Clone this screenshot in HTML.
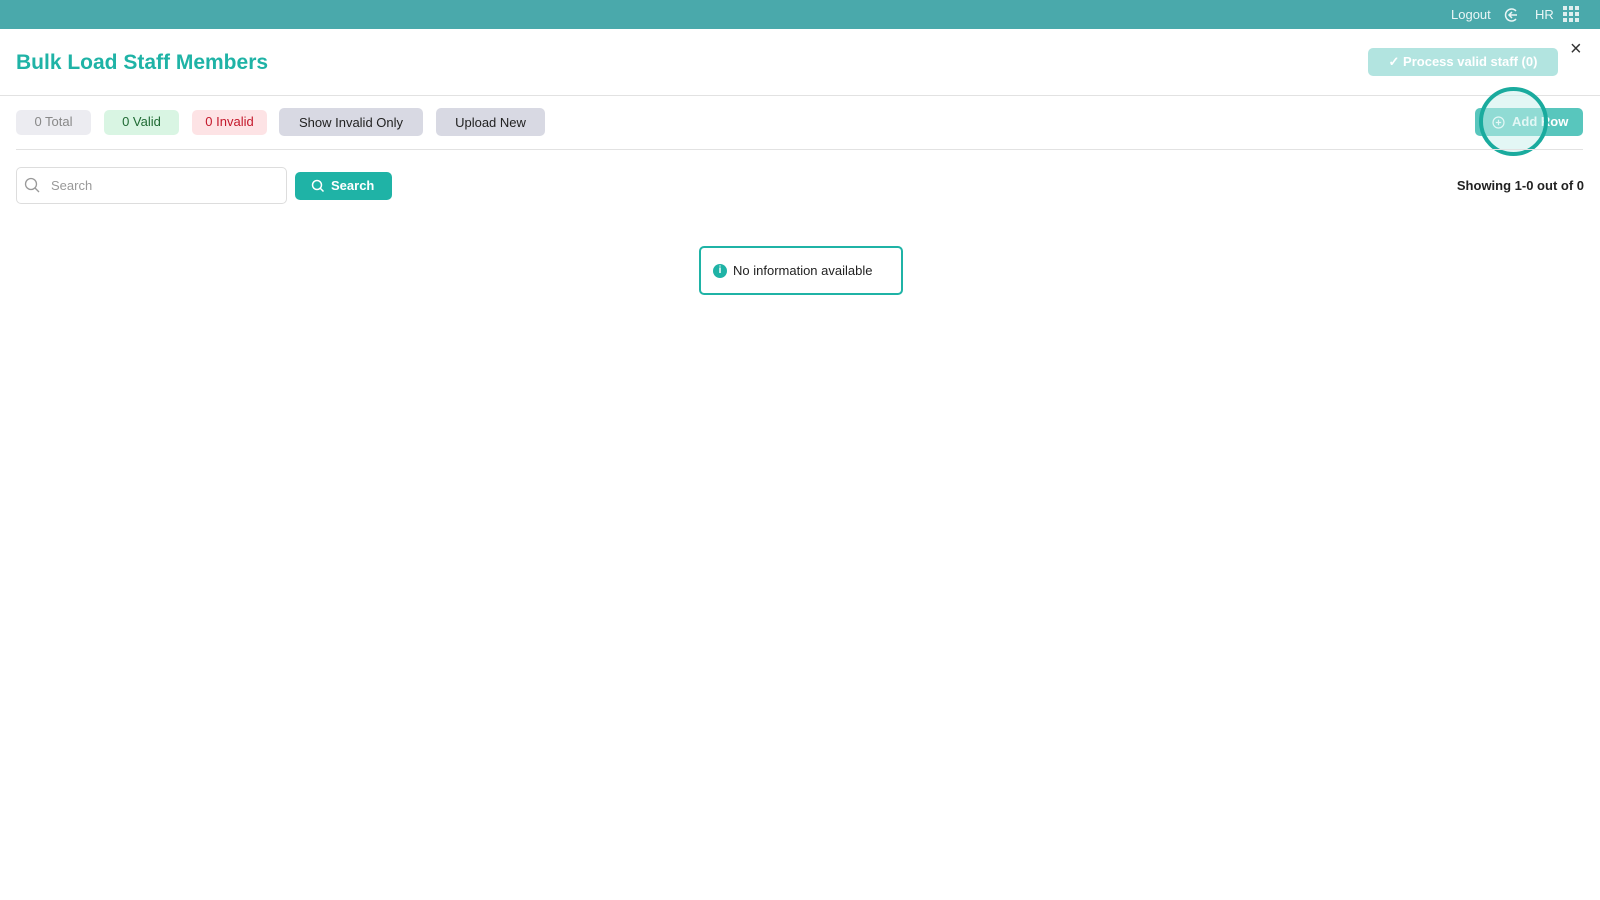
<!DOCTYPE html>
<html><head><style>
*{box-sizing:border-box;margin:0;padding:0}
body{width:1600px;height:900px;background:#fff;font-family:"Liberation Sans",sans-serif;position:relative;overflow:hidden;color:#222}
.top{position:absolute;left:0;top:0;width:1600px;height:29px;background:#4aa9ab}
.abs{position:absolute}
.pill{position:absolute;top:110px;height:25px;border-radius:5px;font-size:13px;line-height:24px;text-align:center}
.btn{position:absolute;top:108px;height:28px;border-radius:5px;font-size:13px;line-height:29px;text-align:center;background:#d8d9e3;color:#222}
</style></head><body>
<div class="top"></div>
<div class="abs" style="left:1451px;top:7px;color:#eaf6f6;font-size:13px">Logout</div>
<svg class="abs" style="left:1504px;top:7px" width="16" height="16" viewBox="0 0 16 16"><path d="M12 4A6 6 0 1 0 12 12" fill="none" stroke="#eaf6f6" stroke-width="1.5"/><path d="M5 8h8M8 5L5 8l3 3" fill="none" stroke="#eaf6f6" stroke-width="1.5"/></svg>
<div class="abs" style="left:1535px;top:7px;color:#eaf6f6;font-size:13px">HR</div>
<svg class="abs" style="left:1563px;top:6px" width="17" height="17"><g fill="#dfeeee"><rect x="0" y="0" width="4" height="4"/><rect x="6" y="0" width="4" height="4"/><rect x="12" y="0" width="4" height="4"/><rect x="0" y="6" width="4" height="4"/><rect x="6" y="6" width="4" height="4"/><rect x="12" y="6" width="4" height="4"/><rect x="0" y="12" width="4" height="4"/><rect x="6" y="12" width="4" height="4"/><rect x="12" y="12" width="4" height="4"/></g></svg>
<div class="abs" style="left:16px;top:51px;font-size:21px;font-weight:bold;color:#1fb3a6">Bulk Load Staff Members</div>
<div class="abs" style="left:1368px;top:48px;width:190px;height:28px;border-radius:5px;background:#b2e4e0;color:#fff;font-size:13px;font-weight:bold;line-height:28px;text-align:center">✓ Process valid staff (0)</div>
<div class="abs" style="left:1570px;top:38px;font-size:20px;color:#333">×</div>
<div class="abs" style="left:0;top:95px;width:1600px;height:1px;background:#e2e2e2"></div>
<div class="pill" style="left:16px;width:75px;background:#ececf1;color:#888">0 Total</div>
<div class="pill" style="left:104px;width:75px;background:#d9f5e3;color:#1f6a33">0 Valid</div>
<div class="pill" style="left:192px;width:75px;background:#fde3e5;color:#c4182b">0 Invalid</div>
<div class="btn" style="left:279px;width:144px">Show Invalid Only</div>
<div class="btn" style="left:436px;width:109px">Upload New</div>
<div class="abs" style="left:1475px;top:108px;width:108px;height:28px;border-radius:5px;background:#58c6bd;color:#fff;font-size:13px;font-weight:bold;line-height:28px;padding-left:37px">Add Row</div>
<svg class="abs" style="left:1492px;top:116px" width="13" height="13"><circle cx="6.5" cy="6.5" r="5.5" fill="none" stroke="#fff" stroke-width="1.2"/><path d="M6.5 3.8v5.4M3.8 6.5h5.4" stroke="#fff" stroke-width="1.2"/></svg>
<div class="abs" style="left:1479px;top:87px;width:69px;height:69px;border-radius:50%;border:4px solid #1aab9e;background:rgba(200,240,236,0.5)"></div>
<div class="abs" style="left:16px;top:149px;width:1567px;height:1px;background:#e2e2e2"></div>
<div class="abs" style="left:16px;top:167px;width:271px;height:37px;border:1px solid #ddd;border-radius:5px"></div>
<svg class="abs" style="left:24px;top:177px" width="16" height="16"><circle cx="7" cy="7" r="5.5" fill="none" stroke="#999" stroke-width="1.3"/><path d="M11 11l4 4" stroke="#999" stroke-width="1.3"/></svg>
<div class="abs" style="left:51px;top:178px;font-size:13px;color:#999">Search</div>
<div class="abs" style="left:295px;top:172px;width:97px;height:28px;border-radius:5px;background:#1fb3a6;color:#fff;font-size:13px;font-weight:bold;line-height:28px;padding-left:36px">Search</div>
<svg class="abs" style="left:311px;top:179px" width="14" height="14"><circle cx="6" cy="6" r="4.5" fill="none" stroke="#fff" stroke-width="1.5"/><path d="M9.5 9.5l3 3" stroke="#fff" stroke-width="1.5"/></svg>
<div class="abs" style="left:1400px;top:178px;font-size:13px;font-weight:bold;color:#222;width:184px;text-align:right">Showing 1-0 out of 0</div>
<div class="abs" style="left:699px;top:246px;width:204px;height:49px;border:2px solid #1fb3a6;border-radius:5px"></div>
<div class="abs" style="left:713px;top:264px;width:14px;height:14px;border-radius:50%;background:#1fb3a6;color:#fff;font-size:10px;font-weight:bold;text-align:center;line-height:14px">i</div>
<div class="abs" style="left:733px;top:263px;font-size:13px;color:#222">No information available</div>
</body></html>
